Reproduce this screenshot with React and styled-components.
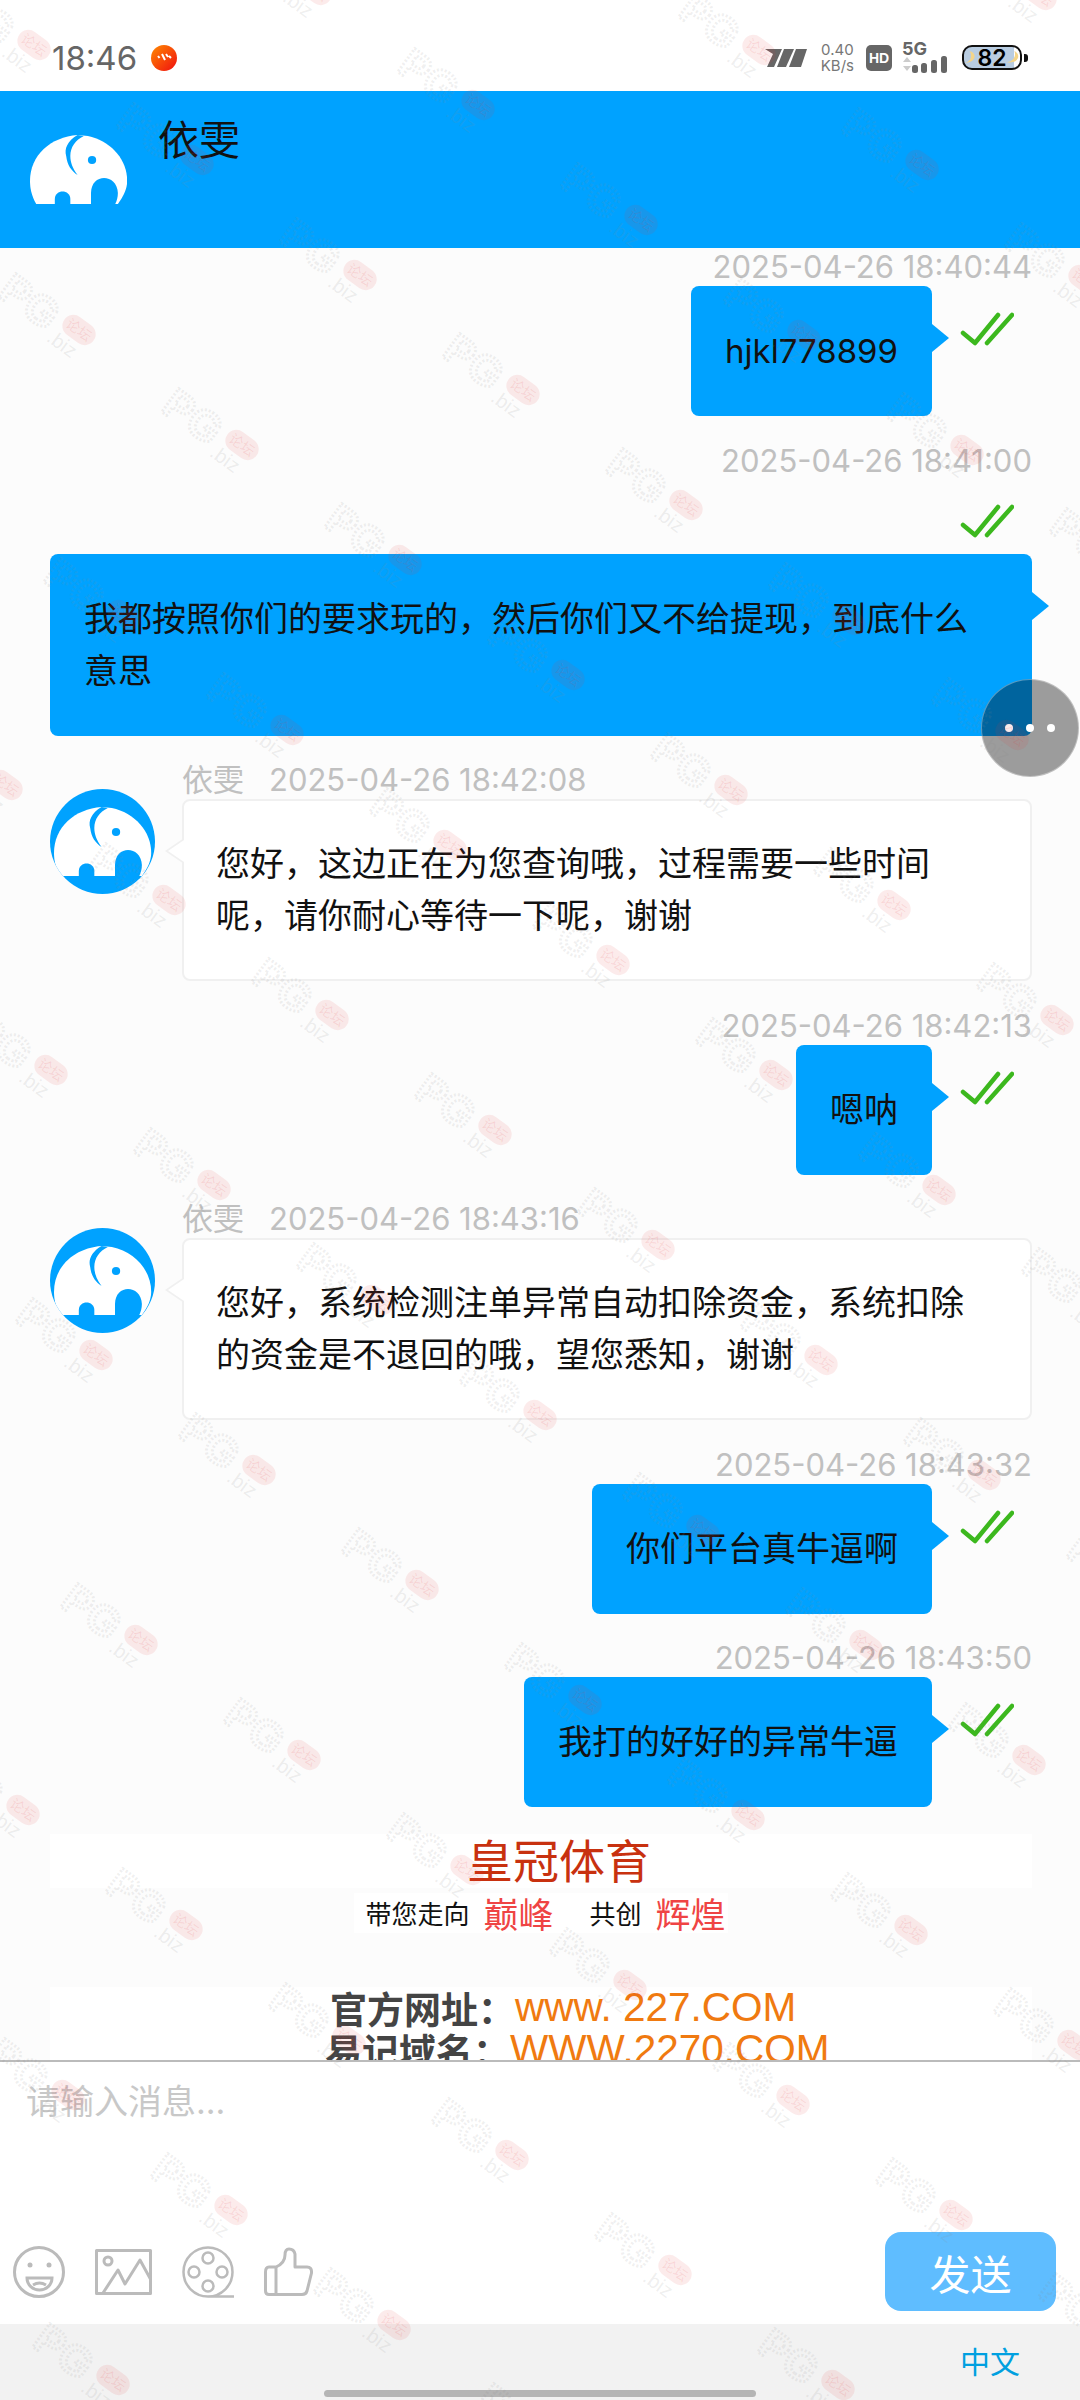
import React from 'react'
import styled, { createGlobalStyle } from 'styled-components'

const BLUE = '#00a2ff'

const GlobalStyle = createGlobalStyle`
    html, body {
        margin: 0;
        padding: 0;
        background: #fff;
    }
    body {
        font-family: Inter, "Noto Sans CJK SC", sans-serif;
    }
`

const messages = [
    { id: 1, mine: true, latin: true, time: '2025-04-26 18:40:44', text: 'hjkl778899' },
    {
        id: 2,
        mine: true,
        wide: true,
        time: '2025-04-26 18:41:00',
        text: '我都按照你们的要求玩的，然后你们又不给提现，到底什么意思',
    },
    {
        id: 3,
        time: '2025-04-26 18:42:08',
        text: '您好，这边正在为您查询哦，过程需要一些时间呢，请你耐心等待一下呢，谢谢',
    },
    { id: 4, mine: true, time: '2025-04-26 18:42:13', text: '嗯呐' },
    {
        id: 5,
        time: '2025-04-26 18:43:16',
        text: '您好，系统检测注单异常自动扣除资金，系统扣除的资金是不退回的哦，望您悉知，谢谢',
    },
    { id: 6, mine: true, time: '2025-04-26 18:43:32', text: '你们平台真牛逼啊' },
    { id: 7, mine: true, time: '2025-04-26 18:43:50', text: '我打的好好的异常牛逼' },
]

// stamp lattice that repeats over the whole page
const stampSpots = () => {
    const spots = []
    for (let m = -12; m < 22; m++) {
        for (let n = -4; n < 16; n++) {
            const x = 197 + 163 * m - 118 * n - 79
            const y = 160 + 115 * m + 170 * n - 52
            if (x > -100 && x < 1080 && y > -90 && y < 2400) spots.push({ x, y })
        }
    }
    return spots
}

const Elephant = ({ bg, x = 0, y = 0 }) => (
    <g transform={`translate(${x} ${y}) scale(1.034 1)`}>
        <path
            fill="#fff"
            d="M6 69 C1 60 0 52 0 46 C0 20 20 2 46 0 L56 1 C78 6 94 24 94 46 C94 54 90 62 85 69 Z"
        />
        <path fill={bg} d="M46 0 C36 6 33 14 35 21 C36 30 40 36 46 40 C41 33 39 27 39 21 C39 12 44 5 52 1 Z" />
        <circle cx="60" cy="25" r="4" fill={bg} />
        <path fill={bg} d="M24 70 V64 C24 54 39 54 39 64 V70 Z" />
        <path fill={bg} d="M59 70 V58 C59 38 84 38 85 58 C85 62 84 66 82 70 Z" />
    </g>
)

const Avatar = () => (
    <AvatarSvg viewBox="0 0 105 105">
        <defs>
            <clipPath id="avatar-clip">
                <circle cx="52.5" cy="52.5" r="52.5" />
            </clipPath>
        </defs>
        <circle cx="52.5" cy="52.5" r="52.5" fill={BLUE} />
        <g clipPath="url(#avatar-clip)">
            <Elephant bg={BLUE} x={4} y={18} />
        </g>
    </AvatarSvg>
)

const Ticks = () => (
    <TickSvg viewBox="0 0 54 34" fill="none" stroke="#3cb81e" strokeWidth="4.5" strokeLinecap="round" strokeLinejoin="round">
        <path d="M3 21 L15 31 L38 3" />
        <path d="M27 31 L52 3" />
    </TickSvg>
)

const Stamp = ({ x, y }) => (
    <StampSvg viewBox="0 0 100 90" style={{ left: x, top: y }}>
        <g transform="rotate(36 19 15)">
            <text x="2" y="30" className="pg">P</text>
            <text x="31" y="30" className="pg">G</text>
        </g>
        <g transform="rotate(36 79 52)">
            <rect x="61" y="41" width="36" height="22" rx="11" fill="#e23c3c" fillOpacity="0.1" />
            <text x="79" y="57" className="tag">论坛</text>
            <text x="58" y="80" className="biz">.biz</text>
        </g>
    </StampSvg>
)

const StatusBar = () => (
    <Status>
        <StatusLeft>
            <Clock>18:46</Clock>
            <svg width="26" height="26" viewBox="0 0 26 26">
                <defs>
                    <linearGradient id="dot-fill" x1="0" y1="0" x2="1" y2="1">
                        <stop offset="0" stopColor="#ff8a00" />
                        <stop offset="1" stopColor="#f00e10" />
                    </linearGradient>
                </defs>
                <circle cx="13" cy="13" r="13" fill="url(#dot-fill)" />
                <path d="M7 11 L8.5 13 M11 9 L14 15 M15 9 L17 12 M18 11 L20 13" stroke="#fff" strokeWidth="2" />
            </svg>
        </StatusLeft>
        <StatusRight>
            <NetworkMark width="42" height="18" viewBox="0 0 42 18" fill="#666">
                <polygon points="0,0 17,0 9,18 2,18 8,5" />
                <polygon points="19,0 29,0 21,18 12,18" />
                <polygon points="31,0 42,0 36,18 24,18" />
            </NetworkMark>
            <Speed>
                <span>0.40</span>
                <span>KB/s</span>
            </Speed>
            <HdBadge>HD</HdBadge>
            <Signal>
                <FiveG>5G</FiveG>
                <svg width="45" height="17" viewBox="0 0 45 17" fill="#666">
                    <path d="M1 6 L5 1 L9 6 Z M1 10 H9 L5 15 Z" fill="#ccc" />
                    <rect x="10" y="9" width="6" height="8" rx="2.5" />
                    <rect x="19" y="7" width="6" height="10" rx="2.5" />
                    <rect x="29" y="4" width="6" height="13" rx="2.5" />
                    <rect x="39" y="0" width="6" height="17" rx="2.5" />
                </svg>
            </Signal>
            <Battery>
                <BatteryBody>
                    <Moon viewBox="0 0 14 14"><path d="M6 0 C14 2 14 12 1 13 C8 11 9 5 6 0 Z" /></Moon>
                    82
                    <Moon viewBox="0 0 14 14"><path d="M8 0 C16 4 12 14 0 12 C7 11 10 6 8 0 Z" /></Moon>
                </BatteryBody>
                <BatteryTip />
            </Battery>
        </StatusRight>
    </Status>
)

const Message = ({ mine, wide, latin, time, text }) => {
    if (mine) {
        return (
            <Outgoing>
                <TimeLine>{time}</TimeLine>
                {wide ? (
                    <>
                        <TopTick><Ticks /></TopTick>
                        <Bubble $wide>{text}</Bubble>
                    </>
                ) : (
                    <BubbleRow>
                        <Bubble $latin={latin}>{text}</Bubble>
                        <SideTick><Ticks /></SideTick>
                    </BubbleRow>
                )}
            </Outgoing>
        )
    }
    return (
        <Incoming>
            <AvatarSlot><Avatar /></AvatarSlot>
            <IncomingBody>
                <NameLine>
                    <span>依雯</span>
                    <span>{time}</span>
                </NameLine>
                <ReplyBubble>{text}</ReplyBubble>
            </IncomingBody>
        </Incoming>
    )
}

const Toolbar = () => (
    <Tools>
        <svg width="52" height="52" viewBox="0 0 52 52" fill="none" stroke="#bbb" strokeWidth="3">
            <circle cx="26" cy="26" r="24.5" />
            <circle cx="17" cy="19" r="2.5" fill="#bbb" stroke="none" />
            <circle cx="36" cy="19" r="2.5" fill="#bbb" stroke="none" />
            <path d="M14 32 H39 C39 39 33 44 26.5 44 C20 44 14 39 14 32 Z" />
            <path d="M20 39 Q26.5 35 33 39" />
        </svg>
        <svg width="57" height="46" viewBox="0 0 57 46" fill="none" stroke="#bbb" strokeWidth="3" strokeLinejoin="round">
            <rect x="1.5" y="1.5" width="54" height="43" />
            <circle cx="13" cy="12" r="4" />
            <path d="M8 44 L23 21 L30 35 L45 11 L56 31" />
        </svg>
        <svg width="52" height="52" viewBox="0 0 52 52" fill="none" stroke="#bbb" strokeWidth="2.5">
            <path d="M26 50.5 A24.5 24.5 0 1 1 26 1.5 A24.5 24.5 0 0 1 26 50.5 H52" />
            <circle cx="26" cy="12" r="5.5" />
            <circle cx="26" cy="40" r="5.5" />
            <circle cx="12" cy="26" r="5.5" />
            <circle cx="40" cy="26" r="5.5" />
        </svg>
        <svg width="49" height="49" viewBox="0 0 49 49" fill="none" stroke="#bbb" strokeWidth="3" strokeLinejoin="round">
            <path d="M12 20 H5 Q1.5 20 1.5 25 V44 Q1.5 47.5 5 47.5 H38 Q42 47.5 43 44 L47.5 26 Q48 20 43 20 H31 V7 Q30 2 25 2 Q21 2 21 8 Q21 16 12 20 Z" />
            <path d="M12 20 V47.5" />
        </svg>
    </Tools>
)

const App = () => (
    <Page>
        <GlobalStyle />
        <StatusBar />
        <Header>
            <HeaderLogo viewBox="0 0 97 69">
                <Elephant bg={BLUE} />
            </HeaderLogo>
            <HeaderName>依雯</HeaderName>
        </Header>
        <Chat>
            {messages.map(msg => <Message key={msg.id} {...msg} />)}
            <Promo>
                <PromoTitle>皇冠体育</PromoTitle>
                <Slogan>
                    <span>带您走向</span>
                    <SloganHot>巅峰</SloganHot>
                    <SloganGap />
                    <span>共创</span>
                    <SloganHot>辉煌</SloganHot>
                </Slogan>
                <Links>
                    <LinkLine $indent={280}>
                        <LinkLabel>官方网址：</LinkLabel>
                        <LinkUrl>www. 227.COM</LinkUrl>
                    </LinkLine>
                    <LinkLine $indent={275}>
                        <LinkLabel>易记域名：</LinkLabel>
                        <LinkUrl>WWW.2270.COM</LinkUrl>
                    </LinkLine>
                </Links>
            </Promo>
        </Chat>
        <Composer>
            <Placeholder>请输入消息...</Placeholder>
            <ComposerRow>
                <Toolbar />
                <SendButton>发送</SendButton>
            </ComposerRow>
        </Composer>
        <Footer>
            <Lang>中文</Lang>
            <HomeBar />
        </Footer>
        <FloatButton>
            <i /><i /><i />
        </FloatButton>
        <StampLayer>
            {stampSpots().map(s => <Stamp key={`${s.x}-${s.y}`} x={s.x} y={s.y} />)}
        </StampLayer>
    </Page>
)

const Page = styled.div`
    position: relative;
    width: 1080px;
    height: 2400px;
    display: flex;
    flex-direction: column;
    overflow: hidden;
    background: #fff;
`

const Status = styled.div`
    height: 91px;
    flex: none;
    display: flex;
    justify-content: space-between;
    align-items: center;
    padding: 24px 52px 0 52px;
    box-sizing: border-box;
`

const StatusLeft = styled.div`
    display: flex;
    align-items: center;
    gap: 14px;
`

const Clock = styled.span`
    font-size: 33px;
    color: #666;
    line-height: 40px;
`

const StatusRight = styled.div`
    display: flex;
    align-items: center;
    gap: 10px;
`

const NetworkMark = styled.svg`
    margin-right: 4px;
`

const Speed = styled.div`
    display: flex;
    flex-direction: column;
    align-items: center;
    margin-right: 2px;
    color: #777;
    font-size: 15px;
    line-height: 16px;
`

const HdBadge = styled.div`
    width: 26px;
    height: 26px;
    display: grid;
    place-items: center;
    border-radius: 5px;
    background: #666;
    color: #fff;
    font-size: 14px;
    font-weight: 800;
    font-family: "Liberation Sans", sans-serif;
`

const Signal = styled.div`
    display: flex;
    flex-direction: column;
    margin-top: -1px;
`

const FiveG = styled.span`
    font-size: 18px;
    line-height: 15px;
    font-weight: 700;
    color: #666;
`

const Battery = styled.div`
    display: flex;
    align-items: center;
    margin-left: 5px;
`

const BatteryBody = styled.div`
    width: 60px;
    height: 25px;
    box-sizing: border-box;
    border: 2px solid #111;
    border-radius: 10px;
    background: linear-gradient(90deg, #b9cde2 90%, #fff 90%);
    display: flex;
    align-items: center;
    justify-content: center;
    color: #000;
    font-size: 23px;
    font-weight: 600;
`

const Moon = styled.svg`
    width: 13px;
    height: 13px;
    flex: none;
    fill: #f4d58a;
`

const BatteryTip = styled.div`
    width: 4px;
    height: 8px;
    margin-left: 2px;
    background: #111;
    border-radius: 0 3px 3px 0;
`

const Header = styled.header`
    height: 157px;
    flex: none;
    display: flex;
    align-items: flex-start;
    padding-left: 30px;
    background: ${BLUE};
`

const HeaderLogo = styled.svg`
    width: 97px;
    height: 69px;
    margin-top: 44px;
    flex: none;
`

const HeaderName = styled.div`
    margin: 20px 0 0 31px;
    font-size: 41px;
    line-height: 58px;
    color: #111;
`

const Chat = styled.main`
    flex: 1;
    min-height: 0;
    overflow: hidden;
    display: flex;
    flex-direction: column;
    background: #fcfcfc;
    padding: 0 48px 0 50px;
`

const Outgoing = styled.section`
    display: flex;
    flex-direction: column;
    align-items: flex-end;
    margin-bottom: 25.5px;
`

const TimeLine = styled.div`
    font-size: 31px;
    line-height: 38px;
    color: #c0c0c0;
`

const BubbleRow = styled.div`
    display: flex;
    align-items: flex-start;
`

const SideTick = styled.div`
    margin: 26px 18px 0 28px;
    height: 34px;
`

const TopTick = styled.div`
    margin: 24px 18px 16px 0;
    height: 34px;
`

const TickSvg = styled.svg`
    display: block;
    width: 54px;
    height: 34px;
`

const Bubble = styled.div`
    position: relative;
    padding: 39px 34px;
    border-radius: 8px;
    background: ${BLUE};
    color: #111;
    font-size: ${props => (props.$latin ? '33px' : '34px')};
    line-height: 52px;
    ${props => props.$wide && 'align-self: stretch;'}

    &::after {
        content: "";
        position: absolute;
        left: 100%;
        top: 38px;
        border-style: solid;
        border-width: 14px 0 14px 17px;
        border-color: transparent transparent transparent ${BLUE};
    }
`

const Incoming = styled.section`
    display: flex;
    align-items: flex-start;
    margin-bottom: 25.5px;
`

const AvatarSlot = styled.div`
    width: 105px;
    flex: none;
    margin: 28px 27px 0 0;
`

const AvatarSvg = styled.svg`
    display: block;
    width: 105px;
    height: 105px;
`

const IncomingBody = styled.div`
    flex: 1;
    min-width: 0;
`

const NameLine = styled.div`
    display: flex;
    gap: 25px;
    font-size: 31px;
    line-height: 38px;
    color: #c0c0c0;
`

const ReplyBubble = styled.div`
    position: relative;
    padding: 37px 64px 37px 32px;
    border: 2px solid #f0f0f0;
    border-radius: 8px;
    background: #fff;
    color: #111;
    font-size: 34px;
    line-height: 52px;

    &::before,
    &::after {
        content: "";
        position: absolute;
        top: 37px;
        border-style: solid;
        border-width: 13px 19px 13px 0;
        border-color: transparent #f0f0f0 transparent transparent;
    }

    &::before {
        right: 100%;
    }

    &::after {
        right: calc(100% - 3px);
        border-right-color: #fff;
    }
`

const Promo = styled.section`
    padding-top: 1px;
    font-family: "Noto Sans CJK SC", sans-serif;
`

const PromoTitle = styled.div`
    height: 54px;
    box-sizing: border-box;
    display: flex;
    align-items: center;
    justify-content: center;
    padding: 0 0 6px 36px;
    background: #fff;
    color: #c8310f;
    font-size: 46px;
    line-height: 48px;
`

const Slogan = styled.div`
    width: fit-content;
    height: 40px;
    margin: 5px auto 0;
    padding: 0 2px 0 11px;
    display: flex;
    align-items: center;
    gap: 14px;
    background: #fff;
    color: #111;
    font-size: 26px;
`

const SloganHot = styled.span`
    font-size: 35px;
    color: #ef4444;
`

const SloganGap = styled.span`
    width: 8px;
`

const Links = styled.div`
    margin-top: 54px;
    height: 90px;
    background: #fff;
`

const LinkLine = styled.div`
    height: 42px;
    display: flex;
    align-items: center;
    padding-left: ${props => props.$indent}px;
`

const LinkLabel = styled.span`
    font-size: 37px;
    font-weight: 700;
    color: #444;
`

const LinkUrl = styled.span`
    font-family: "Liberation Sans", sans-serif;
    font-size: 40.5px;
    color: #f07a10;
`

const Composer = styled.div`
    height: 264px;
    flex: none;
    box-sizing: border-box;
    display: flex;
    flex-direction: column;
    border-top: 2px solid #bbb;
    background: #fff;
    padding: 20px 24px 13px 13px;
`

const Placeholder = styled.div`
    padding-left: 13px;
    font-size: 34px;
    line-height: 40px;
    color: #c8c8c8;
`

const ComposerRow = styled.div`
    margin-top: auto;
    display: flex;
    justify-content: space-between;
    align-items: center;
`

const Tools = styled.div`
    display: flex;
    align-items: center;
    gap: 30px;
`

const SendButton = styled.button`
    width: 171px;
    height: 79px;
    border: 0;
    border-radius: 16px;
    background: #5fbdff;
    color: #fff;
    font: inherit;
    font-size: 41px;
`

const Footer = styled.footer`
    height: 76px;
    flex: none;
    display: flex;
    flex-direction: column;
    background: #f2f2f2;
    padding-top: 18px;
    box-sizing: border-box;
`

const Lang = styled.div`
    align-self: flex-end;
    margin-right: 60px;
    color: #00a0e0;
    font-size: 30px;
    line-height: 40px;
`

const HomeBar = styled.div`
    align-self: center;
    width: 432px;
    height: 7px;
    margin-top: 8px;
    border-radius: 4px;
    background: #b5b5b5;
`

const FloatButton = styled.div`
    position: absolute;
    left: 981px;
    top: 679px;
    width: 98px;
    height: 98px;
    border-radius: 50%;
    box-sizing: border-box;
    border: 1px solid rgba(255, 255, 255, 0.35);
    background: rgba(0, 0, 0, 0.38);
    display: flex;
    align-items: center;
    justify-content: center;
    gap: 13px;

    i {
        width: 8px;
        height: 8px;
        border-radius: 50%;
        background: #fff;
    }
`

const StampLayer = styled.div`
    position: absolute;
    inset: 0;
    pointer-events: none;
`

const StampSvg = styled.svg`
    position: absolute;
    width: 100px;
    height: 90px;
    overflow: visible;

    .pg {
        font-family: "Liberation Sans", sans-serif;
        font-size: 42px;
        font-weight: 700;
        fill: none;
        stroke: #8a8a8a;
        stroke-opacity: 0.14;
        stroke-width: 3px;
        stroke-dasharray: 2 2;
    }

    .tag {
        font-family: "Noto Sans CJK SC", sans-serif;
        font-size: 14px;
        text-anchor: middle;
        fill: #e23c3c;
        fill-opacity: 0.12;
    }

    .biz {
        font-family: "Liberation Sans", sans-serif;
        font-size: 20px;
        fill: #8a8a8a;
        fill-opacity: 0.14;
    }
`

export default App
